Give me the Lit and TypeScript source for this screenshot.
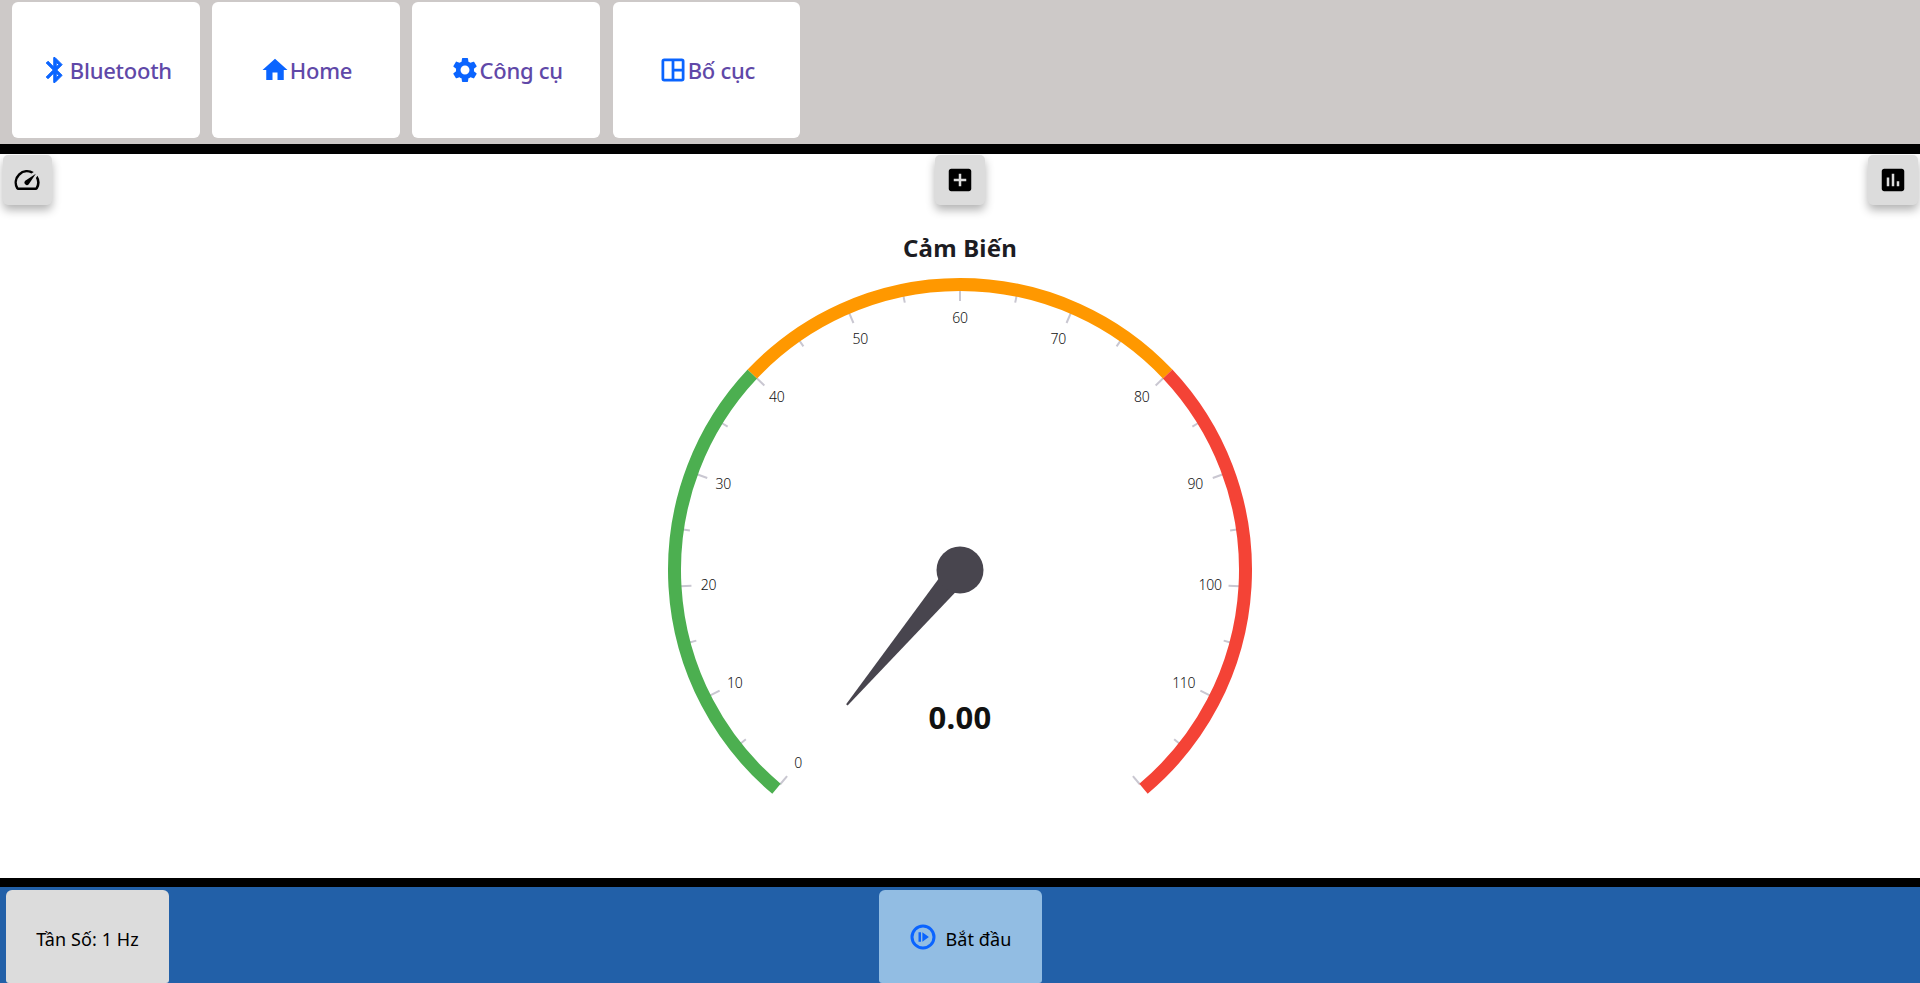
import { LitElement, html, css, svg } from "lit";
import { customElement } from "lit/decorators.js";

const CX = 400, CY = 416;
const polar = (r: number, v: number) => {
  const a = ((-140 + (v * 280) / 120 - 90) * Math.PI) / 180;
  return [CX + r * Math.cos(a), CY + r * Math.sin(a)];
};
const arc = (from: number, to: number, color: string) => {
  const r = 285.5;
  const [x1, y1] = polar(r, from);
  const [x2, y2] = polar(r, to);
  const large = ((to - from) * 280) / 120 > 180 ? 1 : 0;
  return svg`<path d="M${x1} ${y1}A${r} ${r} 0 ${large} 1 ${x2} ${y2}" fill="none" stroke=${color} stroke-width="13"/>`;
};
const ticks = () => {
  const out = [];
  for (let v = 0; v <= 120; v += 5) {
    const major = v % 10 === 0;
    const [x1, y1] = polar(280, v);
    const [x2, y2] = polar(major ? 269 : 273, v);
    out.push(svg`<line x1=${x1} y1=${y1} x2=${x2} y2=${y2} class="tick"/>`);
  }
  return out;
};
const labels = () => {
  const out = [];
  for (let v = 0; v < 120; v += 10) {
    const [x, y] = polar(252, v);
    const shift = v > 60 ? -1.5 : 0;
    out.push(svg`<text x=${x + shift} y=${y + 5} class="label">${v}</text>`);
  }
  return out;
};
const needle = () => {
  // Tapered pointer from the hub toward value 0, in polar terms around the centre.
  const a = (-140 * Math.PI) / 180;
  const ux = Math.sin(a), uy = -Math.cos(a);
  const nx = -uy, ny = ux;
  const pt = (along: number, side: number) =>
    `${CX + ux * along + nx * side} ${CY + uy * along + ny * side}`;
  return svg`<path d="M${pt(0, -12)}L${pt(176, -1)}L${pt(176, 1)}L${pt(0, 12)}Z" fill="#48454e"/>`;
};

const ICONS = {
  bluetooth: "M17.71 7.71 12 2h-1v7.59L6.41 5 5 6.41 10.59 12 5 17.59 6.41 19 11 14.41V22h1l5.71-5.71-4.3-4.29 4.3-4.29zM13 5.83l1.88 1.88L13 9.59V5.83zm1.88 10.46L13 18.17v-3.76l1.88 1.88z",
  home: "M10 20v-6h4v6h5v-8h3L12 3 2 12h3v8z",
  gear: "M19.14 12.94c.04-.3.06-.61.06-.94 0-.32-.02-.64-.07-.94l2.03-1.58c.18-.14.23-.41.12-.61l-1.92-3.32c-.12-.22-.37-.29-.59-.22l-2.39.96c-.5-.38-1.03-.7-1.62-.94l-.36-2.54c-.04-.24-.24-.41-.48-.41h-3.84c-.24 0-.43.17-.47.41l-.36 2.54c-.59.24-1.13.57-1.62.94l-2.39-.96c-.22-.08-.47 0-.59.22L2.74 8.87c-.12.21-.08.47.12.61l2.03 1.58c-.05.3-.09.63-.09.94s.02.64.07.94l-2.03 1.58c-.18.14-.23.41-.12.61l1.92 3.32c.12.22.37.29.59.22l2.39-.96c.5.38 1.03.7 1.62.94l.36 2.54c.05.24.24.41.48.41h3.84c.24 0 .44-.17.47-.41l.36-2.54c.59-.24 1.13-.56 1.62-.94l2.39.96c.22.08.47 0 .59-.22l1.92-3.32c.12-.22.07-.47-.12-.61l-2.01-1.58zM12 15.6c-1.98 0-3.6-1.62-3.6-3.6s1.62-3.6 3.6-3.6 3.6 1.62 3.6 3.6-1.62 3.6-3.6 3.6z",
  layout: "M5 2.8h14a2.2 2.2 0 0 1 2.2 2.2v14a2.2 2.2 0 0 1-2.2 2.2H5a2.2 2.2 0 0 1-2.2-2.2V5A2.2 2.2 0 0 1 5 2.8zM5 5V19H10.9V5zM13.1 5V10.9H19V5zM13.1 13.1V19H19V13.1z",
  speed: "m20.38 8.57-1.23 1.85a8 8 0 0 1-.22 7.58H5.07A8 8 0 0 1 15.58 6.85l1.85-1.23A10 10 0 0 0 3.35 19a2 2 0 0 0 1.72 1h13.85a2 2 0 0 0 1.74-1 10 10 0 0 0-.27-10.44zm-9.79 6.84a2 2 0 0 0 2.83 0l5.66-8.49-8.49 5.66a2 2 0 0 0 0 2.83z",
  add: "M19 3H5c-1.11 0-2 .9-2 2v14c0 1.1.89 2 2 2h14c1.1 0 2-.9 2-2V5c0-1.1-.9-2-2-2zm-2 10h-4v4h-2v-4H7v-2h4V7h2v4h4v2z",
  chart: "M19 3H5c-1.1 0-2 .9-2 2v14c0 1.1.9 2 2 2h14c1.1 0 2-.9 2-2V5c0-1.1-.9-2-2-2zM9 17H7v-7h2v7zm4 0h-2V7h2v10zm4 0h-2v-4h2v4z",
  play: "M12 2a10 10 0 1 0 0 20 10 10 0 0 0 0-20zm0 17.6a7.6 7.6 0 1 1 0-15.2 7.6 7.6 0 0 1 0 15.2zM8.4 8.2h2v7.6h-2zm3.1 0 5.2 3.8-5.2 3.8z",
};
const icon = (d: string, cls: string) =>
  html`<svg class=${cls} viewBox="0 0 24 24" aria-hidden="true"><path d=${d} fill="currentColor" /></svg>`;

@customElement("app-root")
export class AppRoot extends LitElement {
  static styles = css`
    :host {
      display: flex;
      flex-direction: column;
      height: 983px;
      overflow: hidden;
      font-family: "Noto Sans", "Open Sans", sans-serif;
      background: #fff;
    }
    .top {
      height: 144px;
      flex: none;
      box-sizing: border-box;
      padding: 2px 12px 6px;
      background: #cdc9c8;
      display: flex;
      gap: 12.5px;
    }
    .tab {
      width: 187.7px;
      background: #fff;
      border-radius: 6px;
      display: flex;
      align-items: center;
      justify-content: center;
      color: #6048a8;
      font-size: 22px;
      font-weight: 500;
      letter-spacing: -0.25px;
    }
    .ti { width: 30px; height: 30px; color: #0a64ff; flex: none; }
    .ti.bold path { stroke: currentColor; stroke-width: 0.8; }
    .rule { height: 10px; flex: none; background: #000; }
    .rule.low { height: 9px; }
    .main {
      flex: 1;
      min-height: 0;
      display: flex;
      flex-direction: column;
      position: relative;
    }
    .tools {
      display: flex;
      justify-content: space-between;
      padding: 1px 2.5px 0;
      height: 50px;
      flex: none;
    }
    .sq {
      width: 49.5px;
      height: 50px;
      border-radius: 5px;
      background: #dcdcdc;
      box-shadow: 0 5px 10px rgba(0, 0, 0, 0.3);
      display: flex;
      align-items: center;
      justify-content: center;
      color: #000;
    }
    .si { width: 30px; height: 30px; }
    .gauge {
      position: absolute;
      left: 560px;
      top: 0;
      width: 800px;
      height: 700px;
    }
    .gauge svg { display: block; }
    .tick { stroke: #c9c7d1; stroke-width: 2; }
    .label { font-size: 14px; font-weight: 300; fill: #111; text-anchor: middle; letter-spacing: -0.3px; }
    .title { font-size: 24px; font-weight: 700; fill: #1c1c22; text-anchor: middle; letter-spacing: 0.2px; }
    .value { font-size: 31px; font-weight: 700; fill: #111; text-anchor: middle; letter-spacing: 0.3px; }
    .bottom {
      height: 96px;
      flex: none;
      box-sizing: border-box;
      background: #2260a8;
      padding: 3px 6px 0;
      display: flex;
    }
    .slot { flex: 1; display: flex; }
    .btn {
      box-sizing: border-box;
      width: 163px;
      padding-top: 5px;
      border-radius: 6px 6px 3px 3px;
      background: #dcdcdc;
      color: #000;
      font-size: 18px;
      letter-spacing: 0.1px;
      display: flex;
      align-items: center;
      justify-content: center;
      gap: 7px;
    }
    .btn.go { background: #92bde3; }
    .pi { width: 30px; height: 30px; color: #0a64ff; margin-top: -5px; }
  `;

  render() {
    return html`
      <div class="top">
        <div class="tab">${icon(ICONS.bluetooth, "ti bold")}Bluetooth</div>
        <div class="tab">${icon(ICONS.home, "ti")}Home</div>
        <div class="tab">${icon(ICONS.gear, "ti")}Công cụ</div>
        <div class="tab">${icon(ICONS.layout, "ti")}Bố cục</div>
      </div>
      <div class="rule"></div>
      <div class="main">
        <div class="tools">
          <div class="sq">${icon(ICONS.speed, "si")}</div>
          <div class="sq">${icon(ICONS.add, "si")}</div>
          <div class="sq">${icon(ICONS.chart, "si")}</div>
        </div>
        <div class="gauge">
          <svg width="800" height="700" viewBox="0 0 800 700">
            <text x="400" y="103" class="title">Cảm Biến</text>
            ${ticks()}
            ${arc(0, 40, "#4caf50")}
            ${arc(40, 80, "#ff9800")}
            ${arc(80, 120, "#f44336")}
            ${labels()}
            ${needle()}
            <circle cx=${CX} cy=${CY} r="23.5" fill="#48454e"/>
            <text x="400" y="575" class="value">0.00</text>
          </svg>
        </div>
      </div>
      <div class="rule low"></div>
      <div class="bottom">
        <div class="slot"><div class="btn">Tần Số: 1 Hz</div></div>
        <div class="btn go">${icon(ICONS.play, "pi")}Bắt đầu</div>
        <div class="slot"></div>
      </div>
    `;
  }
}
